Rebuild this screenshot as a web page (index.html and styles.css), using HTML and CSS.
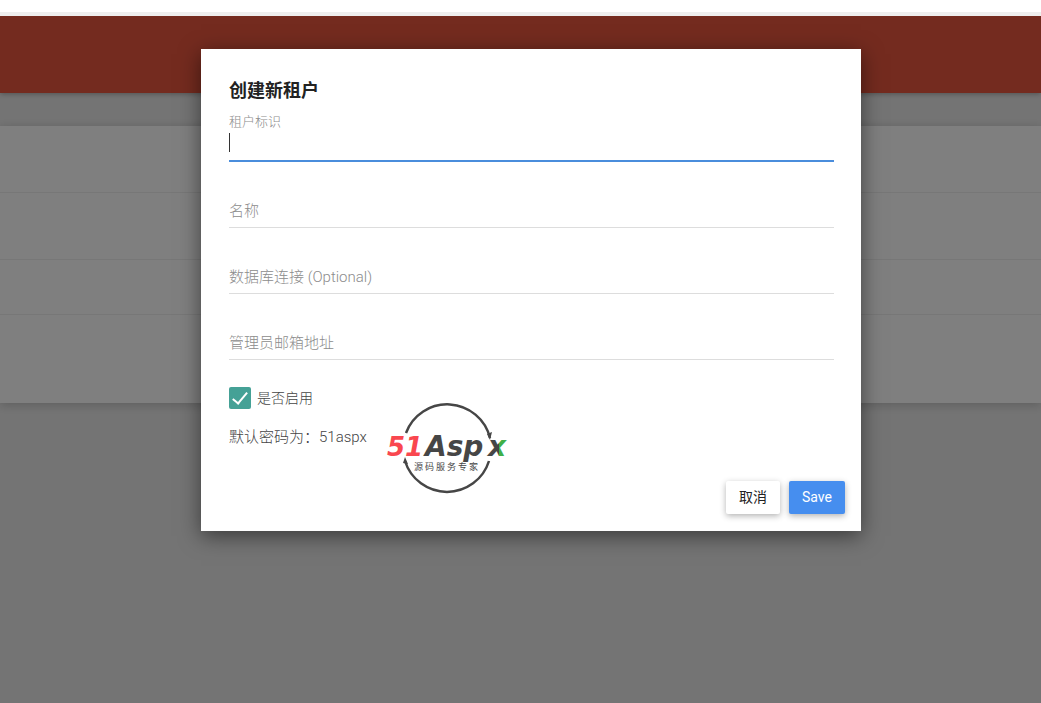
FILE: index.html
```html
<!DOCTYPE html>
<html lang="zh-CN">
<head>
    <meta charset="UTF-8">
    <meta name="viewport" content="width=device-width, initial-scale=1.0">
    <title>创建新租户</title>
    <link rel="stylesheet" href="styles.css">
</head>
<body>
    <div class="topbar"></div>
    <div class="page">
        <header class="navbar"></header>
        <main class="card">
            <div class="row"></div>
            <div class="row"></div>
            <div class="row row-short"></div>
            <div class="row row-last"></div>
        </main>

        <div class="overlay">
            <form class="modal" role="dialog" aria-labelledby="modal-title">
                <div class="modal-body">
                    <h1 id="modal-title">创建新租户</h1>
                    <div class="field active">
                        <label for="tenancy-name">租户标识</label>
                        <input type="text" id="tenancy-name">
                    </div>
                    <div class="field">
                        <label for="name">名称</label>
                        <input type="text" id="name">
                    </div>
                    <div class="field">
                        <label for="connection">数据库连接 (Optional)</label>
                        <input type="text" id="connection">
                    </div>
                    <div class="field">
                        <label for="email">管理员邮箱地址</label>
                        <input type="email" id="email">
                    </div>
                </div>
                <div class="modal-footer">
                    <div class="options">
                        <label class="check"><input type="checkbox" checked>是否启用</label>
                        <p>默认密码为：51aspx</p>
                    </div>
                    <svg class="logo" width="126" height="92" viewBox="0 0 126 92" role="img" aria-label="51Aspx">
                        <defs>
                            <linearGradient id="x-fill" gradientUnits="userSpaceOnUse" x1="102" y1="45" x2="122" y2="45">
                                <stop offset="0.5" stop-color="#464646"/>
                                <stop offset="0.5" stop-color="#3faf49"/>
                            </linearGradient>
                        </defs>
                        <g fill="none" stroke="#464646" stroke-width="2.5">
                            <path d="M19 30A44 44 0 0 1 103 35"/>
                            <path d="M18 58A44 44 0 0 0 102 58"/>
                        </g>
                        <path fill="#464646" d="M100 31l3 6 2-8zM21 61l-5-1 2-6z"/>
                        <text x="0" y="53" fill="#f9474f" class="logo-number">51</text>
                        <text x="38" y="53" fill="#464646" class="logo-name">Asp</text>
                        <text x="101" y="53" fill="url(#x-fill)" class="logo-name">x</text>
                        <text x="27" y="67" fill="#464646" class="logo-slogan">源 码 服 务 专 家</text>
                    </svg>
                    <div class="actions">
                        <button type="button" class="btn">取消</button>
                        <button type="submit" class="btn btn-primary">Save</button>
                    </div>
                </div>
            </form>
        </div>
    </div>
</body>
</html>
```
FILE: styles.css
```css
* {
    box-sizing: border-box;
}

body {
    margin: 0;
    min-height: 100vh;
    display: flex;
    flex-direction: column;
    background-color: white;
    font-family: Roboto, "Noto Sans CJK SC", sans-serif;
    font-size: 15px;
    line-height: 20px;
    font-weight: 300;
}

.topbar {
    height: 16px;
    border-bottom: 4px solid #eeeeee;
}

.page {
    flex: 1;
    position: relative;
    overflow: hidden;
    background-color: #e9e9e9;
}

.navbar {
    height: 77px;
    background-color: #e8563f;
    box-shadow: 0 1px 5px rgba(0, 0, 0, 0.3);
}

.card {
    margin-top: 33px;
    background-color: white;
    box-shadow: 0 2px 10px rgba(0, 0, 0, 0.2);
}

.row {
    height: 67px;
    border-bottom: 1px solid #eeeeee;
}

.row-short {
    height: 55px;
}

.row-last {
    height: 88px;
    border-bottom: none;
}

.overlay {
    position: absolute;
    inset: 0;
    padding: 33px 0 33px 21px;
    background-color: rgba(0, 0, 0, 0.5);
}

.modal {
    max-width: 660px;
    margin: 0 auto;
    background-color: white;
    box-shadow: 0 5px 20px rgba(0, 0, 0, 0.5);
}

.modal-body {
    padding: 29px 27px 0 28px;
}

h1 {
    margin: 0 0 8px;
    font-size: 18px;
    line-height: 26px;
    font-weight: bold;
    color: #222222;
}

/* the label sits in the input's own cell until the field is active */
.field {
    display: grid;
    height: 66px;
}

.field label,
.field input {
    grid-area: 1 / 1;
    align-self: end;
}

.field label {
    padding-bottom: 7px;
    color: #8c8c8c;
    pointer-events: none;
}

.field input {
    width: 100%;
    height: 28px;
    padding: 0;
    border: none;
    border-bottom: 1px solid #dddddd;
    background: none;
    font: inherit;
    outline: none;
}

.field.active {
    display: block;
    height: 50px;
}

.field.active label {
    display: block;
    padding: 0;
    font-size: 13px;
}

.field.active input {
    display: block;
    height: 30px;
    border-bottom: 2px solid #4a8ddc;
    background: linear-gradient(#333333, #333333) no-repeat 0 1px / 1px 19px;
}

.modal-footer {
    display: flex;
    padding: 27px 16px 17px 28px;
}

.options {
    color: #444444;
}

.check {
    display: flex;
    align-items: center;
    gap: 6px;
    font-size: 14px;
}

.check input {
    appearance: none;
    width: 22px;
    height: 22px;
    margin: 0;
    border-radius: 2px;
    background-color: #45a196;
    display: grid;
    place-items: center;
}

.check input::after {
    content: "";
    width: 6px;
    height: 13px;
    margin-bottom: 3px;
    border: solid white;
    border-width: 0 2px 2px 0;
    transform: rotate(40deg);
}

.options p {
    margin: 18px 0 0;
}

.logo {
    margin: 16px 0 19px 20px;
    overflow: visible;
}

.logo-number {
    font: italic bold 26px "DejaVu Sans", sans-serif;
}

.logo-name {
    font: italic bold 28px "DejaVu Sans", sans-serif;
}

.logo-slogan {
    font: 400 9px "Noto Sans CJK SC", sans-serif;
}

.actions {
    display: flex;
    gap: 9px;
    margin-left: auto;
    align-self: flex-end;
}

.btn {
    height: 33px;
    padding: 0 13px 1px;
    border: none;
    border-radius: 2px;
    background-color: white;
    color: #222222;
    font: 400 14px/20px Roboto, "Noto Sans CJK SC", sans-serif;
    box-shadow: 0 2px 6px rgba(0, 0, 0, 0.3);
    cursor: pointer;
}

.btn-primary {
    background-color: #468eef;
    color: white;
}
```
